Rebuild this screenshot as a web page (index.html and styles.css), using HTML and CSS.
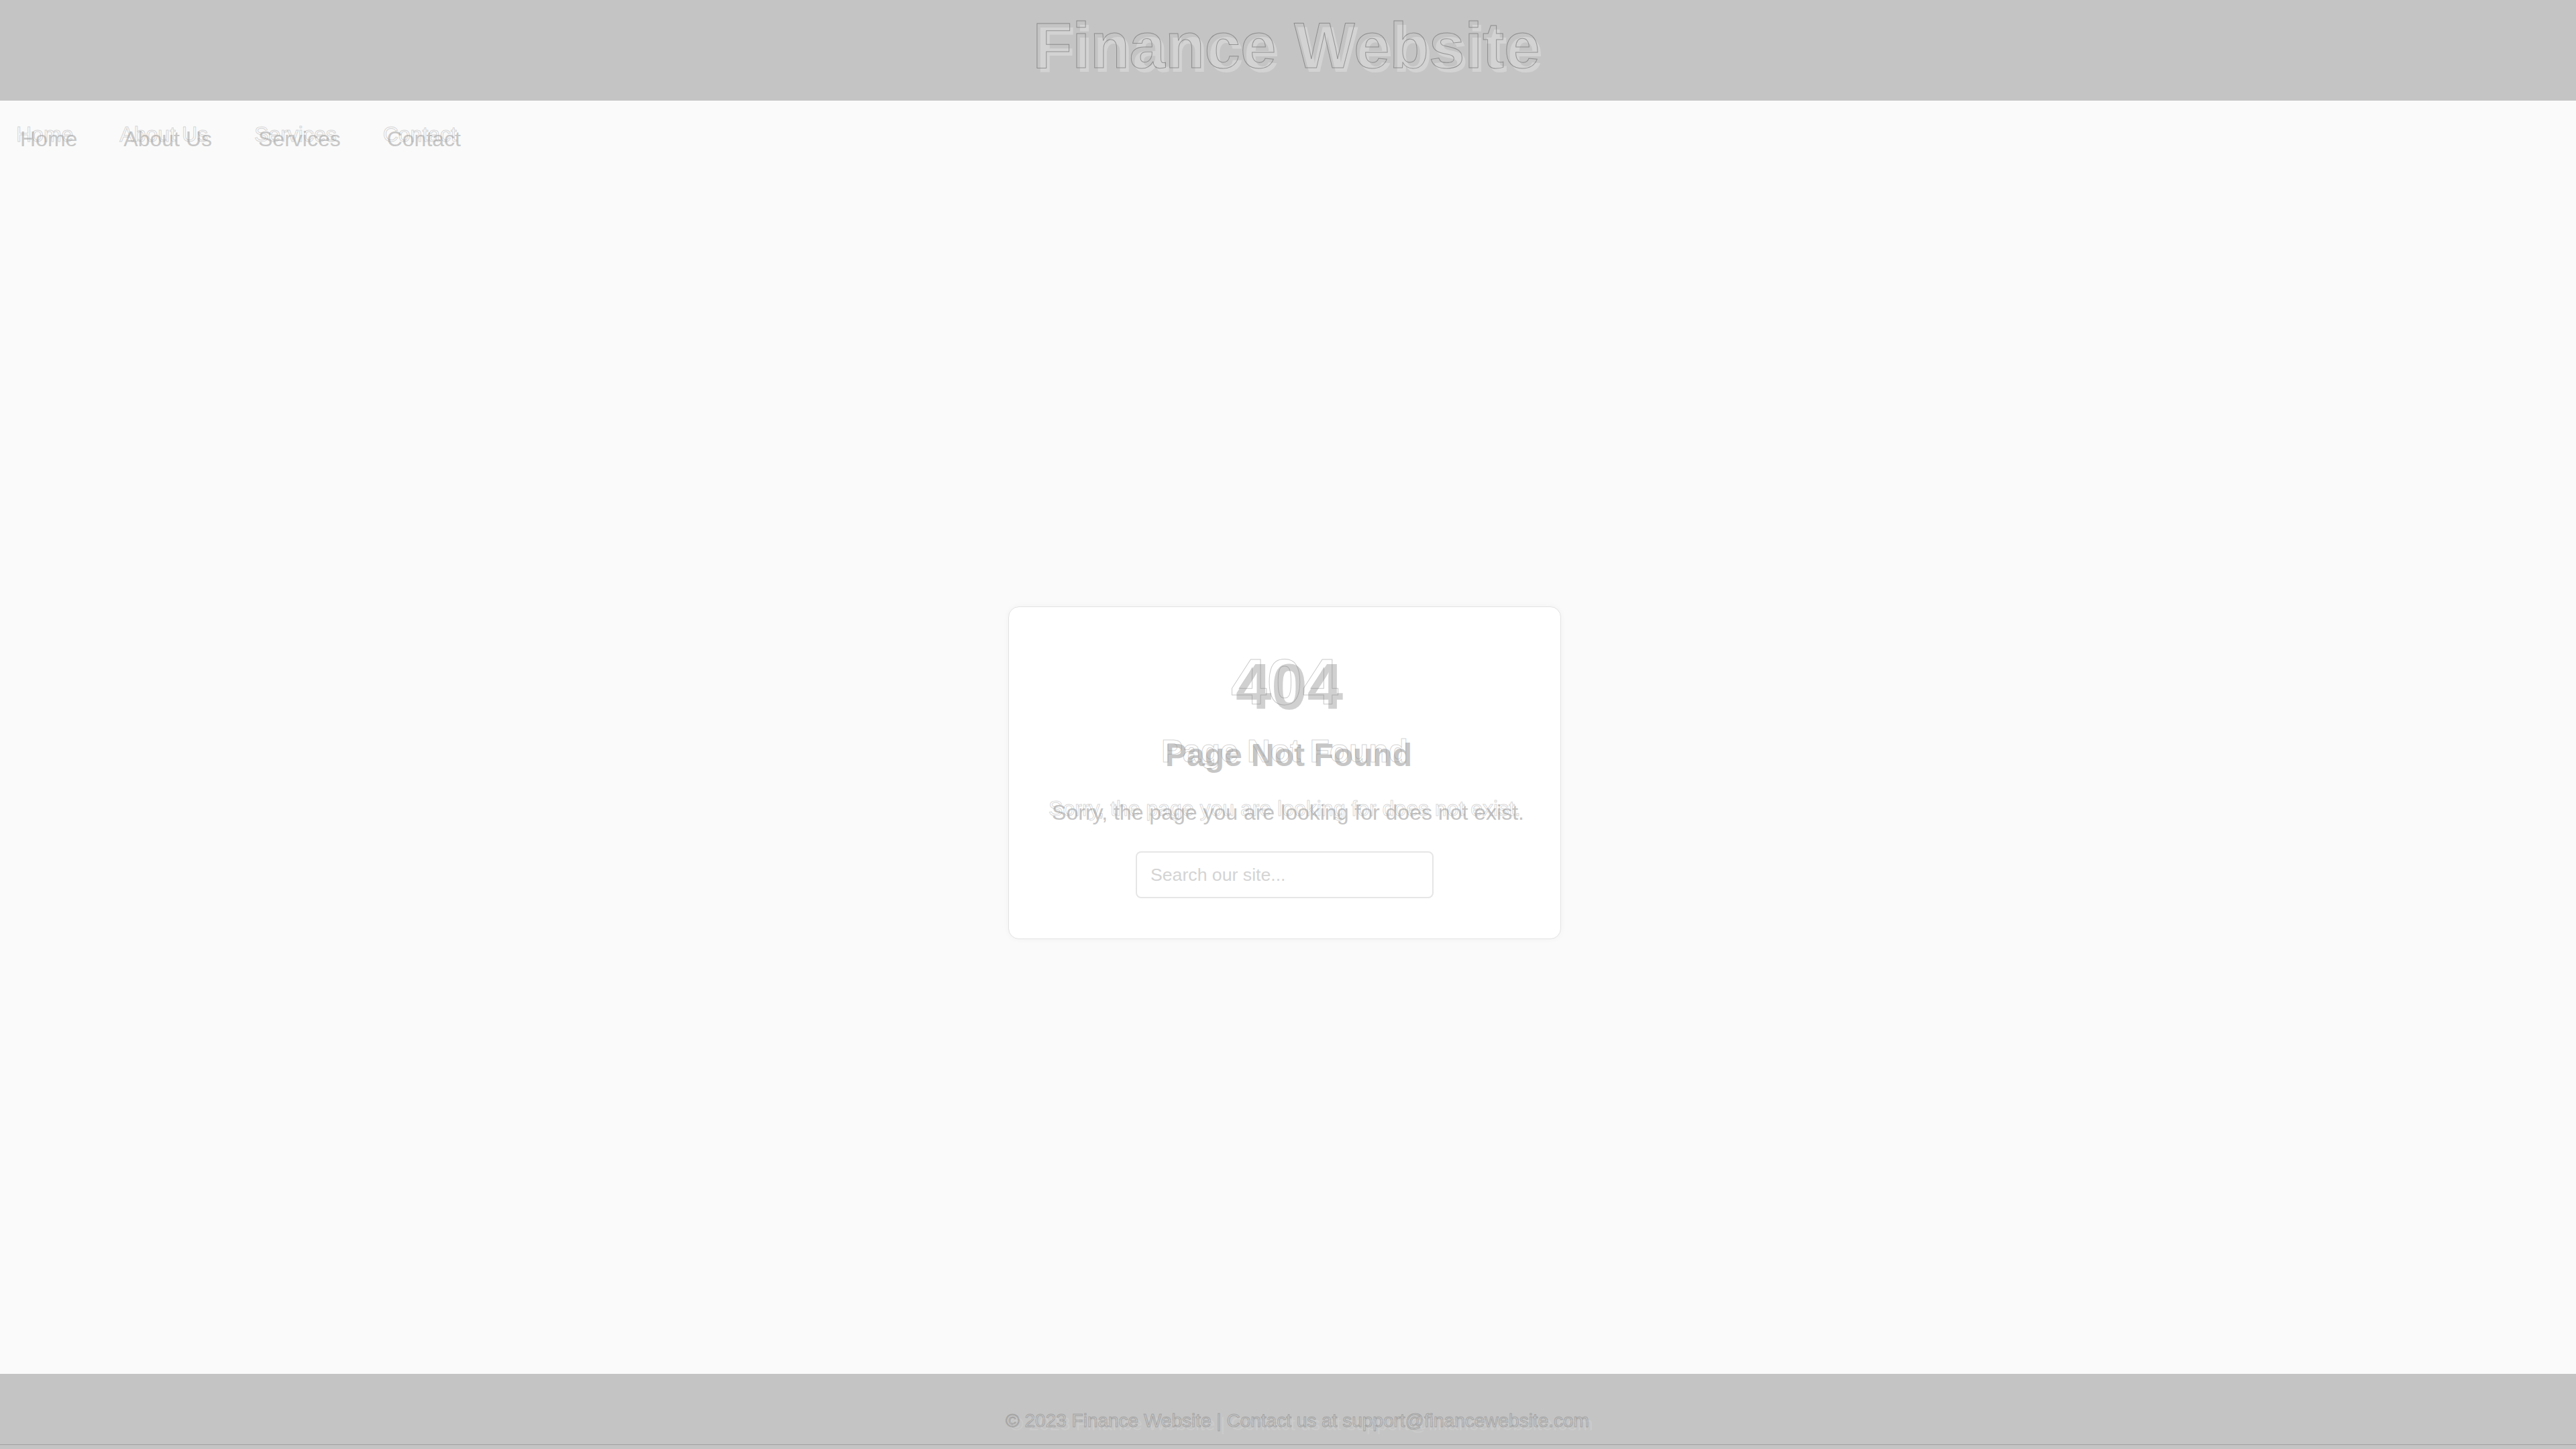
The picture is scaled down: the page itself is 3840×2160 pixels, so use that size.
FILE: index.html
```html
<!DOCTYPE html>
<html lang="en">
<head>
<meta charset="utf-8">
<title>404 - Finance Website</title>
<link rel="stylesheet" href="styles.css">
</head>
<body>
  <header class="site-header">
    <h1 class="site-title">Finance Website</h1>
  </header>
  <nav class="site-nav">
    <a class="nav-link" href="#">Home</a>
    <a class="nav-link" href="#">About Us</a>
    <a class="nav-link" href="#">Services</a>
    <a class="nav-link" href="#">Contact</a>
  </nav>
  <main class="main">
    <section class="card">
      <h2 class="code">404</h2>
      <h3 class="heading">Page Not Found</h3>
      <p class="message">Sorry, the page you are looking for does not exist.</p>
      <input class="search" type="text" placeholder="Search our site...">
    </section>
  </main>
  <footer class="site-footer">
    <p class="footer-text">© 2023 Finance Website | Contact us at support@financewebsite.com</p>
  </footer>
</body>
</html>
```

FILE: styles.css
```css
* { box-sizing: border-box; }
html, body { margin: 0; padding: 0; }
body {
  min-height: 100vh;
  display: flex;
  flex-direction: column;
  background: #fafafa;
  font-family: "Liberation Sans", Arial, sans-serif;
  overflow: hidden;
}
.site-header {
  height: 150px;
  background: #c4c4c4;
  padding: 20px 5px 0 0;
  text-align: center;
}
.site-title {
  margin: 0;
  font-size: 96px;
  line-height: 96px;
  font-weight: 700;
  color: transparent;
  -webkit-text-stroke: 1px rgba(95, 95, 95, 0.55);
  text-shadow: 5px 6px 0 #d3d3d3;
}
.site-nav {
  display: flex;
  gap: 69px;
  padding: 32px 24px;
}
.nav-link {
  font-size: 32px;
  line-height: 37px;
  text-decoration: none;
  color: transparent;
  -webkit-text-stroke: 1px rgba(140, 140, 140, 0.35);
  text-shadow: 6px 7px 0 #c7c7c7;
}
.main {
  flex: 1;
  display: flex;
  align-items: center;
  justify-content: center;
  padding: 5px 10px 0 0;
}
.card {
  width: 824px;
  background: #ffffff;
  border: 1px solid #e3e3e3;
  border-radius: 16px;
  box-shadow: 0 0 10px rgba(0, 0, 0, 0.04);
  padding: 64px 40px 60px;
  display: flex;
  flex-direction: column;
  align-items: center;
  text-align: center;
}
.code {
  margin: 0;
  font-size: 96px;
  line-height: 96px;
  font-weight: 700;
  color: transparent;
  -webkit-text-stroke: 1px rgba(120, 120, 120, 0.4);
  text-shadow: 7px 7px 0 #d0d0d0;
}
.heading {
  margin: 31px 0 0;
  font-size: 48px;
  line-height: 48px;
  font-weight: 700;
  color: transparent;
  -webkit-text-stroke: 1px rgba(130, 130, 130, 0.35);
  text-shadow: 6px 6px 0 #c6c6c6;
}
.message {
  margin: 45px 0 0;
  font-size: 32px;
  line-height: 32px;
  color: transparent;
  -webkit-text-stroke: 1px rgba(140, 140, 140, 0.35);
  text-shadow: 5px 6px 0 #c4c4c4;
  white-space: nowrap;
}
.search {
  margin-top: 48px;
  width: 444px;
  height: 70px;
  padding: 0 20px;
  border: 2px solid #e6e6e6;
  border-radius: 8px;
  background: #ffffff;
  font-family: "Liberation Sans", Arial, sans-serif;
  font-size: 26.67px;
  color: #bbbbbb;
  outline: none;
}
.search::placeholder {
  color: #d4d4d4;
}
.site-footer {
  height: 112px;
  background: #c4c4c4;
  padding: 54px 0 0 28px;
  text-align: center;
  border-bottom: 6px solid #c4c4c4;
  box-shadow: inset 0 -7px 0 -6px #a0a0a0;
}
.footer-text {
  margin: 0;
  font-size: 28px;
  line-height: 32px;
  color: transparent;
  -webkit-text-stroke: 1px rgba(120, 120, 120, 0.45);
  text-shadow: 6px 5px 0 #cbcbcb;
}
```
